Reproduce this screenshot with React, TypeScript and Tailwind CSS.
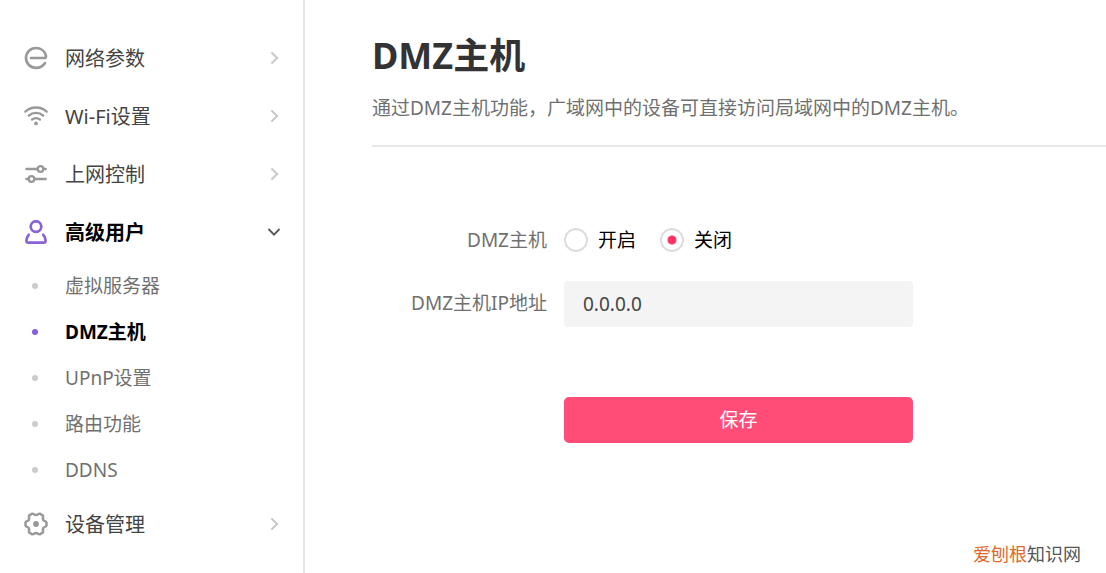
import { useState } from 'react'
import type { ReactNode } from 'react'

const strokeProps = {
    viewBox: '0 0 24 24',
    fill: 'none',
    stroke: 'currentColor',
    strokeLinecap: 'round' as const,
    strokeLinejoin: 'round' as const,
    'aria-hidden': true,
}

function NetworkIcon() {
    return (
        <svg {...strokeProps} strokeWidth={2.7} className="w-6 h-6">
            <path d="M7 12H20.2C21.8 12 22.3 10.9 21.8 9.2C20.6 5 16.6 2 12 2C6.4 2 2 6.4 2 12C2 17.6 6.4 21.9 12 21.9C15.7 21.9 19 20 20.9 17.2" />
        </svg>
    )
}

function WifiIcon() {
    return (
        <svg {...strokeProps} strokeWidth={2.4} className="w-6 h-6">
            <path d="M1.4 7.6C7.4 2.2 16.6 2.2 22.6 7.6" />
            <path d="M4.8 11.6C8.9 8 15.1 8 19.2 11.6" />
            <path d="M8 15.6C10.3 13.7 13.7 13.7 16 15.6" />
            <circle cx="12" cy="19.4" r="1.9" fill="currentColor" stroke="none" />
        </svg>
    )
}

function ControlIcon() {
    return (
        <svg {...strokeProps} strokeWidth={2.3} className="w-6 h-6">
            <path d="M2.4 7H13.4M19.6 7H21.8" />
            <circle cx="16.5" cy="7" r="2.8" />
            <path d="M2.4 17H4.6M10.6 17H21.8" />
            <circle cx="7.5" cy="17" r="2.8" />
        </svg>
    )
}

function UserIcon() {
    return (
        <svg {...strokeProps} strokeWidth={2.7} className="w-6 h-6">
            <circle cx="12" cy="6.6" r="5.3" />
            <path d="M4.7 14.8C3.3 16.4 2.5 18.6 2.4 20.6C2.3 21.9 3 22.6 4.3 22.6H19.7C21 22.6 21.7 21.9 21.6 20.6C21.5 18.6 20.7 16.4 19.3 14.8" />
        </svg>
    )
}

function GearIcon() {
    return (
        <svg {...strokeProps} strokeWidth={2.5} className="w-6 h-6">
            <path d="M8.2 1.7C9.7 1.3 10 3 12 3C14 3 14.3 1.3 15.8 1.7L18.6 3.3C19.9 4.4 18.3 5.8 19.1 7.7C19.9 9.6 22.2 8.8 22.5 10.5V13.5C22.2 15.2 19.9 14.4 19.1 16.3C18.3 18.2 19.9 19.6 18.6 20.7L15.8 22.3C14.3 22.7 14 21 12 21C10 21 9.7 22.7 8.2 22.3L5.4 20.7C4.1 19.6 5.7 18.2 4.9 16.3C4.1 14.4 1.8 15.2 1.5 13.5V10.5C1.8 8.8 4.1 9.6 4.9 7.7C5.7 5.8 4.1 4.4 5.4 3.3Z" />
            <circle cx="12" cy="12" r="2.9" fill="currentColor" stroke="none" />
        </svg>
    )
}

function Chevron({ open }: { open?: boolean }) {
    return (
        <svg
            viewBox="0 0 14 14"
            fill="none"
            stroke="currentColor"
            strokeWidth={open ? 1.8 : 2}
            aria-hidden
            className={`ml-auto w-[14px] h-[14px] ${open ? 'text-[#555555]' : 'text-[#c8c8c8]'}`}
        >
            <path d={open ? 'M1.5 4L7 9.6L12.5 4' : 'M4.4 1.5L10.2 7L4.4 12.5'} />
        </svg>
    )
}

interface MenuItem {
    label: string
    icon: ReactNode
    children?: string[]
}

const menu: MenuItem[] = [
    { label: '网络参数', icon: <NetworkIcon /> },
    { label: 'Wi-Fi设置', icon: <WifiIcon /> },
    { label: '上网控制', icon: <ControlIcon /> },
    {
        label: '高级用户',
        icon: <UserIcon />,
        children: ['虚拟服务器', 'DMZ主机', 'UPnP设置', '路由功能', 'DDNS'],
    },
    { label: '设备管理', icon: <GearIcon /> },
]

function Sidebar() {
    const [page, setPage] = useState('DMZ主机')

    return (
        <nav className="w-[305px] shrink-0 border-r-2 border-[#e6e6e6] pt-[29px]">
            <ul>
                {menu.map((item) => {
                    const open = !!item.children
                    return (
                        <li key={item.label}>
                            <button
                                type="button"
                                aria-expanded={open}
                                className={`flex items-center w-full h-[58px] pl-6 pr-[22px] text-[20px] ${open ? 'font-bold text-black' : 'text-[#444444]'}`}
                            >
                                <span className={`mr-[17px] ${open ? 'text-[#8962d3]' : 'text-[#999999]'}`}>{item.icon}</span>
                                <span className="pt-[2px]">{item.label}</span>
                                <Chevron open={open} />
                            </button>

                            {item.children && (
                                <ul className="py-[2px]">
                                    {item.children.map((name) => (
                                        <li key={name}>
                                            <a
                                                href="#"
                                                onClick={() => setPage(name)}
                                                className={`flex items-center h-[46px] pl-8 text-[19px] ${name === page ? 'font-bold text-black' : 'text-[#707070]'}`}
                                            >
                                                <span className={`w-[6px] h-[6px] mr-[27px] rounded-full ${name === page ? 'bg-[#8560d8]' : 'bg-[#cccccc]'}`} />
                                                {name}
                                            </a>
                                        </li>
                                    ))}
                                </ul>
                            )}
                        </li>
                    )
                })}
            </ul>
        </nav>
    )
}

const radioClass =
    'appearance-none w-6 h-6 mr-[10px] rounded-full border-2 border-[#dddddd] bg-white checked:bg-[radial-gradient(circle,#ff3366_0_4px,transparent_5px)]'

function DmzForm() {
    const [enabled, setEnabled] = useState(false)
    const [ip, setIp] = useState('0.0.0.0')

    return (
        <form className="grid grid-cols-[175px_349px] gap-x-[17px] items-center text-[19px]" onSubmit={(e) => e.preventDefault()}>
            <span id="dmz-label" className="text-right text-[#707070]">DMZ主机</span>
            <div role="radiogroup" aria-labelledby="dmz-label" className="flex gap-6 text-black">
                <label className="flex items-center">
                    <input type="radio" name="dmz" className={radioClass} checked={enabled} onChange={() => setEnabled(true)} />
                    开启
                </label>
                <label className="flex items-center">
                    <input type="radio" name="dmz" className={radioClass} checked={!enabled} onChange={() => setEnabled(false)} />
                    关闭
                </label>
            </div>

            <label htmlFor="dmz-ip" className="mt-[26px] text-right text-[#707070]">DMZ主机IP地址</label>
            <input
                id="dmz-ip"
                type="text"
                value={ip}
                onChange={(e) => setIp(e.target.value)}
                className="h-[46px] mt-[26px] px-[19px] rounded-[4px] bg-[#f4f4f4] text-[#444444] outline-none"
            />

            <button type="submit" className="col-start-2 h-[46px] mt-[70px] pt-[2px] rounded-[5px] bg-[#ff4d78] text-white">
                保存
            </button>
        </form>
    )
}

export default function App() {
    return (
        <div className="flex min-h-screen bg-white font-['Noto_Sans','Noto_Sans_CJK_SC',sans-serif]">
            <Sidebar />

            <main className="flex flex-col flex-1 min-w-0 pl-[67px]">
                <header className="pt-8 pb-[23px] mb-[79px] border-b-2 border-[#e8e8e8]">
                    <h1 className="text-[36px] leading-[48px] font-bold text-[#333333]">DMZ主机</h1>
                    <p className="mt-[14px] text-[19px] leading-[28px] text-[#707070]">
                        通过DMZ主机功能，广域网中的设备可直接访问局域网中的DMZ主机。
                    </p>
                </header>

                <DmzForm />

                <p className="mt-auto self-end pr-[25px] pb-[6px] text-[18px] leading-[26px] text-[#555555]">
                    <span className="text-[#e0692c]">爱刨根</span>知识网
                </p>
            </main>
        </div>
    )
}
